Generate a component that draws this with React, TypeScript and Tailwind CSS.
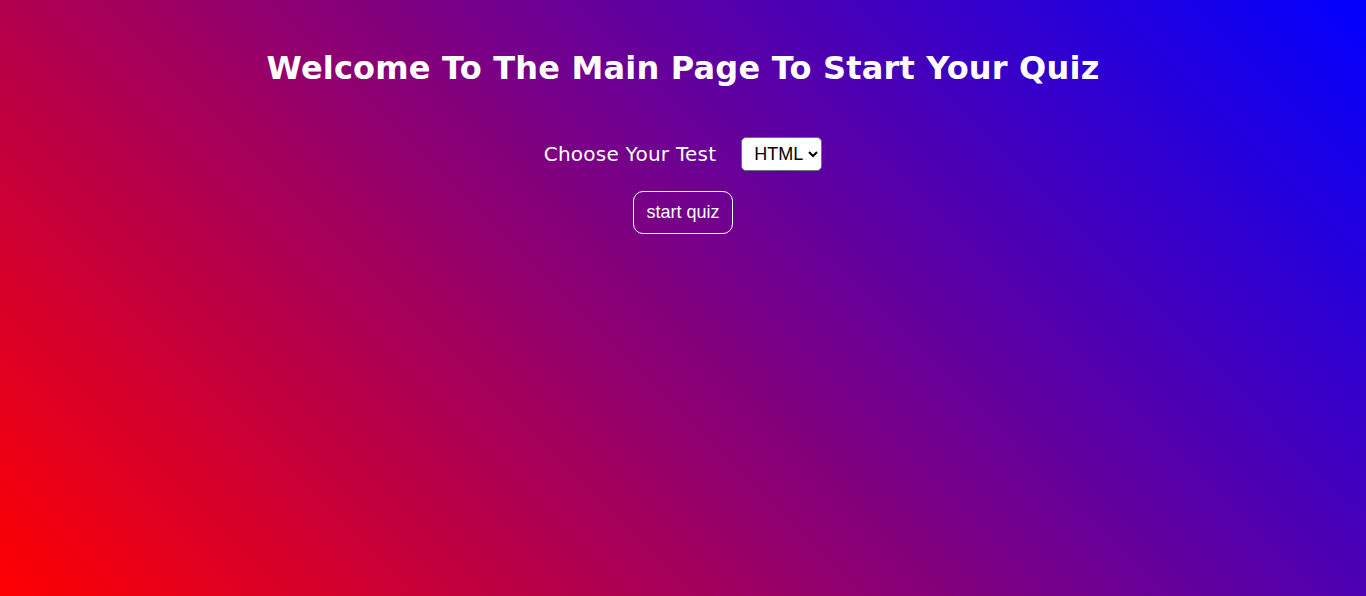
export default function App() {
  return (
    <div className="w-[1366px] h-[596px] bg-[linear-gradient(45deg,#ff0000,#0000ff)] flex flex-col items-center text-white">
      <h1 className="mt-[48px] text-[32px] font-bold leading-[40px] tracking-[0.19px] font-['DejaVu_Sans',Verdana,sans-serif]">
        Welcome To The Main Page To Start Your Quiz
      </h1>
      <div className="mt-[49px] flex items-center">
        <span className="text-[20px] font-['DejaVu_Sans',Verdana,sans-serif] leading-[24px] tracking-[0.25px]">Choose Your Test</span>
        <select className="ml-[25px] h-[34px] w-[81px] bg-white text-black text-[18px] font-['Liberation_Sans',Arial,sans-serif] rounded-[5px] border border-gray-500 pl-[8px]">
          <option>HTML</option>
          <option>CSS</option>
          <option>JavaScript</option>
        </select>
      </div>
      <button className="mt-[20px] w-[100px] h-[43px] border border-white rounded-[10px] text-[18px] font-['Liberation_Sans',Arial,sans-serif] text-white bg-transparent">
        start quiz
      </button>
    </div>
  );
}
